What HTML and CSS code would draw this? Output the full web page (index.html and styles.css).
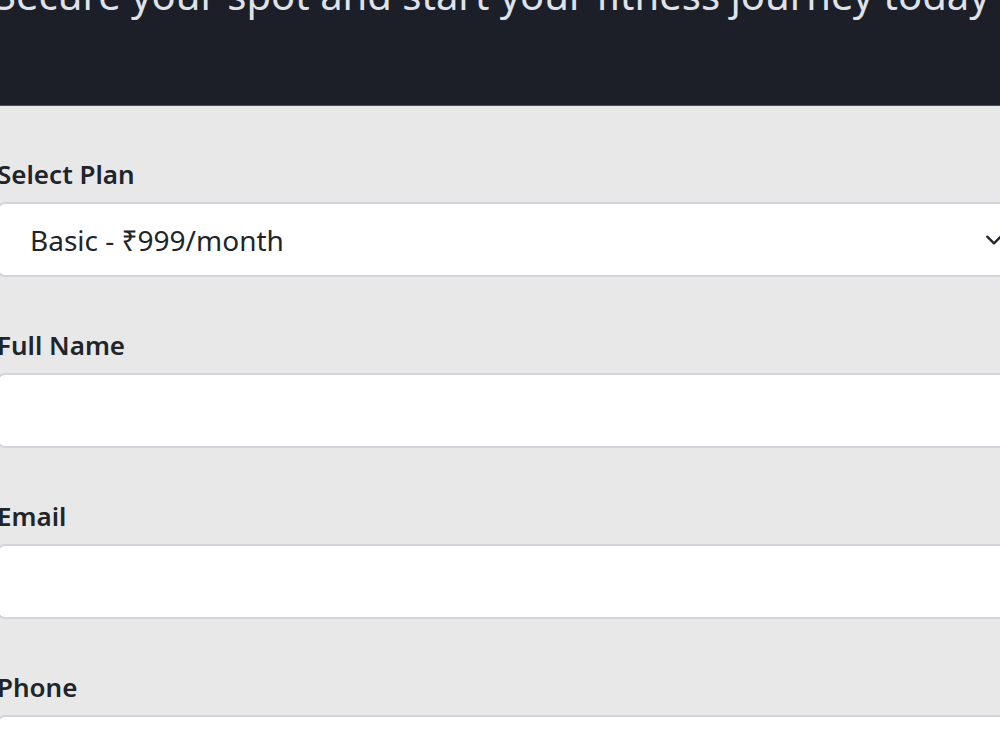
FILE: index.html
```html
<!DOCTYPE html>
<html lang="en">
<head>
    <meta charset="UTF-8">
    <title>Join Now</title>
    <link rel="stylesheet" href="styles.css">
</head>
<body>

<header class="hero">
    <p class="hero-sub">Secure your spot and start your fitness journey today</p>
</header>

<section class="signup">
    <form id="signup-form">
        <div class="field">
            <label for="plan">Select Plan</label>
            <select id="plan" class="form-select">
                <option>Basic - ₹999/month</option>
                <option>Standard - ₹1499/month</option>
                <option>Premium - ₹1999/month</option>
            </select>
        </div>
        <div class="field">
            <label for="name">Full Name</label>
            <input type="text" id="name" class="form-input">
        </div>
        <div class="field">
            <label for="email">Email</label>
            <input type="email" id="email" class="form-input">
        </div>
        <div class="field">
            <label for="phone">Phone</label>
            <input type="tel" id="phone" class="form-input">
        </div>
    </form>
</section>

</body>
</html>
```

FILE: styles.css
```css
html, body {
    margin: 0;
    padding: 0;
    overflow: hidden;
}

body {
    font-family: "Noto Sans", "Open Sans", sans-serif;
    background: #e8e8e9;
    color: #212529;
}

.hero {
    background: #1d1f28;
    border-bottom: 1px solid #4b4f58;
    height: 105px;
    overflow: hidden;
}

.hero-sub {
    margin: -29px 0 0 -6px;
    font-size: 40px;
    line-height: 48px;
    color: #dfe2e8;
    white-space: nowrap;
}

.signup {
    padding-top: 48px;
    margin-left: -3px;
    width: 1040px;
}

.field {
    margin-bottom: 48px;
}

.field label {
    display: block;
    font-size: 26px;
    font-weight: 600;
    line-height: 40px;
    margin-bottom: 8px;
}

.form-select,
.form-input {
    display: block;
    box-sizing: border-box;
    width: 100%;
    height: 75px;
    padding: 0 30px;
    font-family: inherit;
    font-size: 28px;
    color: #212529;
    background-color: #fff;
    border: 2px solid #d2d4da;
    border-radius: 8px;
    outline: none;
}

.form-select {
    appearance: none;
    -webkit-appearance: none;
    padding-left: 31px;
    background-image: url("data:image/svg+xml,%3csvg xmlns='http://www.w3.org/2000/svg' viewBox='0 0 16 16'%3e%3cpath fill='none' stroke='%23212529' stroke-linecap='round' stroke-linejoin='round' stroke-width='2' d='m2 5 6 6 6-6'/%3e%3c/svg%3e");
    background-repeat: no-repeat;
    background-position: right 30px center;
    background-size: 22px 18px;
}
```
